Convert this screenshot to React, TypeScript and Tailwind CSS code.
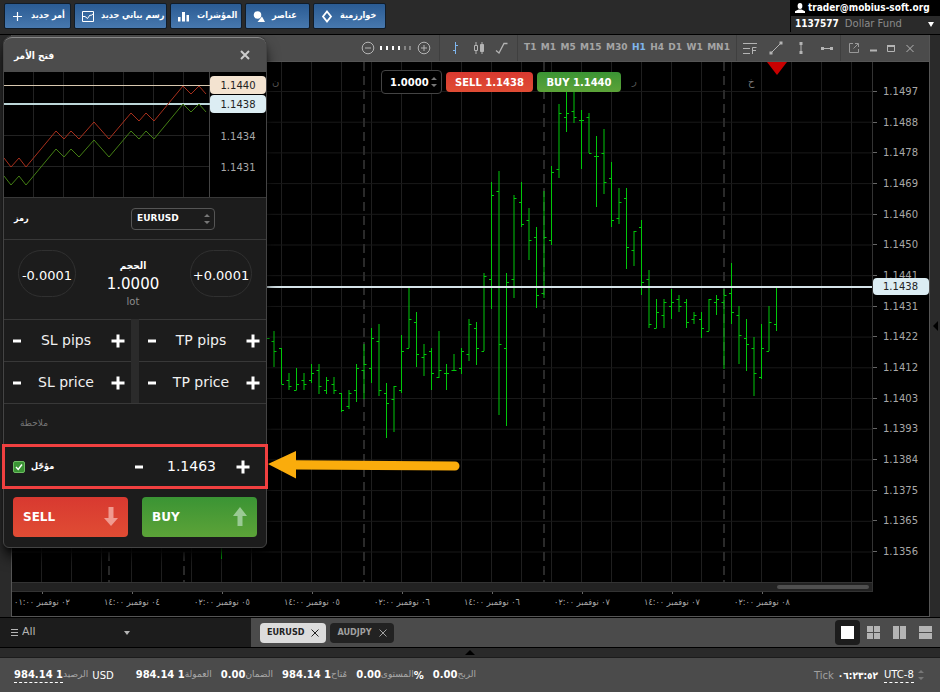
import React, {ReactNode, useState} from 'react';
import clsx from 'clsx';

type Bar = [high: number, low: number, open: number, close: number];

const CONDENSED = "font-['DejaVu_Sans_Condensed','DejaVu_Sans',sans-serif]";

const TIMEFRAMES = ['T1', 'M1', 'M5', 'M15', 'M30', 'H1', 'H4', 'D1', 'W1', 'MN1'];

const PRICES = [
    '1.1497', '1.1488', '1.1478', '1.1469', '1.1460', '1.1450', '1.1441', '1.1431',
    '1.1422', '1.1412', '1.1403', '1.1393', '1.1384', '1.1375', '1.1365', '1.1356'
];

const TIMES = [
    '٠٢ نوفمبر ٠١:٠٠',
    '٠٤ نوفمبر ١٤:٠٠',
    '٠٥ نوفمبر ٠٢:٠٠',
    '٠٥ نوفمبر ١٤:٠٠',
    '٠٦ نوفمبر ٠٢:٠٠',
    '٠٦ نوفمبر ١٤:٠٠',
    '٠٧ نوفمبر ٠٢:٠٠',
    '٠٧ نوفمبر ١٤:٠٠',
    '٠٨ نوفمبر ٠٢:٠٠'
];

const FIRST_BAR_X = 274;
const BAR_STEP = 7.5;

const BARS: Bar[] = [
    [331, 367, 341, 351], [348, 384, 348, 384], [373, 390, 380, 386], [368, 390, 390, 384],
    [373, 390, 380, 384], [364, 383, 380, 373], [364, 394, 370, 386], [377, 394, 390, 380],
    [377, 394, 384, 390], [393, 412, 393, 410], [390, 409, 406, 393], [364, 402, 390, 368],
    [344, 399, 370, 364], [328, 383, 368, 338], [324, 396, 341, 390], [383, 438, 393, 403],
    [386, 432, 399, 386], [335, 393, 390, 351], [288, 348, 348, 319], [312, 367, 322, 354],
    [344, 376, 357, 354], [348, 390, 351, 373], [331, 378, 377, 370], [364, 390, 373, 373],
    [354, 371, 370, 370], [348, 374, 368, 351], [319, 361, 354, 324], [322, 365, 328, 348],
    [273, 351, 351, 276], [182, 309, 279, 195], [171, 415, 191, 344], [273, 426, 348, 282],
    [195, 298, 279, 198], [182, 227, 202, 224], [208, 260, 220, 240], [227, 308, 237, 295],
    [191, 298, 293, 237], [166, 245, 240, 172], [104, 178, 169, 113], [92, 132, 117, 113],
    [92, 123, 111, 117], [110, 169, 120, 120], [113, 153, 117, 153], [136, 207, 156, 156],
    [129, 194, 153, 182], [162, 227, 178, 220], [188, 224, 218, 202], [188, 269, 198, 247],
    [231, 266, 250, 231], [220, 295, 227, 282], [270, 328, 279, 324], [299, 328, 328, 312],
    [299, 328, 315, 302], [289, 319, 306, 302], [295, 312, 299, 306], [299, 328, 302, 322],
    [312, 324, 319, 315], [312, 338, 319, 328], [299, 331, 331, 299], [295, 315, 302, 299],
    [289, 369, 302, 295], [263, 324, 293, 312], [306, 364, 315, 335], [319, 371, 338, 344],
    [337, 396, 348, 373], [324, 379, 377, 348], [306, 351, 351, 322], [287, 331, 324, 287]
];

const barPath = ([high, low, open, close]: Bar, i: number) => {
    const x = FIRST_BAR_X + i * BAR_STEP;
    return `M${x} ${high}V${low}M${x - 2.5} ${open + 0.5}H${x}M${x} ${close + 0.5}H${x + 2.5}`;
};

const PriceChart = () => (
    <svg
        viewBox="12 62 860 520"
        preserveAspectRatio="none"
        className="absolute inset-0 h-full w-full"
        fill="none"
        aria-hidden="true">
        {Array.from({length: 28}, (_, i) => (
            <path key={i} d={`M${41.5 + i * 30} 62V582`} stroke="#1f1f1f"/>
        ))}
        {PRICES.map((p, i) => (
            <path key={p} d={`M12 ${91.5 + i * 30.7}H872`} stroke="#191919"/>
        ))}
        {[109, 184, 364, 544, 724].map((x) => (
            <path key={x} d={`M${x} 62V582`} stroke="#2a2a2a" strokeWidth="2" strokeDasharray="9 5"/>
        ))}
        <path d={BARS.map(barPath).join('')} stroke="#00c80a"/>
        <path d="M221.5 300V559M267 338.5H269.5" stroke="#00c80a"/>
        <path d="M12 287H872" stroke="#d5e3e8" strokeWidth="2"/>
        <path d="M767 62H787L777 75Z" fill="#c80000"/>
    </svg>
);

const RED = '4,157 11,166 19,157 26,166 56,130 64,138 71,130 79,138 94,121 109,138 131,112 139,120 146,112 154,120 183,85 191,93 199,85 206,93';
const GREEN = '4,175 11,184 19,175 26,184 56,148 64,156 71,148 79,156 94,139 109,156 131,130 139,138 146,130 154,138 183,103 191,111 199,103 206,111';

const TickChart = () => (
    <svg
        viewBox="4 71 206 125"
        preserveAspectRatio="none"
        className="h-full min-w-0 flex-1"
        fill="none"
        aria-hidden="true">
        <path
            d="M33.5 71V196M63.5 71V196M93.5 71V196M123.5 71V196M153.5 71V196M183.5 71V196M4 134.5H210M4 165.5H210"
            stroke="#222"/>
        <path d="M209.5 71V196" stroke="#444"/>
        <path d="M4 84.5H210" stroke="#d8c8b0"/>
        <path d="M4 103H210" stroke="#bcd6d8" strokeWidth="2"/>
        <polyline points={RED} stroke="#a8301c"/>
        <polyline points={GREEN} stroke="#447f14"/>
    </svg>
);

const Spinner = ({className}: {className?: string}) => (
    <svg viewBox="0 0 6 12" className={clsx('pointer-events-none h-3 w-1.5', className)} fill="#777" aria-hidden="true">
        <path d="M0 4 3 1 6 4ZM0 8 3 11 6 8Z"/>
    </svg>
);

interface TopButtonProps {
    label: string;
    className: string;
    children: ReactNode;
}

const TopButton = ({label, className, children}: TopButtonProps) => (
    <button
        type="button"
        className={clsx(
            'flex h-[26px] items-center gap-1.5 rounded-xs border border-[#111c28] bg-linear-to-b from-[#2a5b93] to-[#4778ae] pl-1.5 text-[9px] font-bold whitespace-nowrap text-white',
            CONDENSED,
            className
        )}>
        <svg viewBox="0 0 14 14" className="h-3.5 w-3.5 shrink-0" fill="none" stroke="#fff" aria-hidden="true">
            {children}
        </svg>
        <span>{label}</span>
    </button>
);

const TopBar = () => (
    <header className="flex justify-between border-b border-black bg-[#2a2a2a]">
        <div className="flex gap-[3px] pt-[3px] pb-[5px] pl-1">
            <TopButton label="أمر جديد" className="w-[67px]">
                <path d="M6.5 3V12M2 7.5H11" strokeWidth="1.2"/>
            </TopButton>
            <TopButton label="رسم بياني جديد" className="w-[93px]">
                <path d="M1.5 2.5H12.5V12.5H1.5ZM2 7.5H4L6.5 9.5L9 6L10 6.5L12 5"/>
            </TopButton>
            <TopButton label="المؤشرات" className="w-[72px]">
                <path d="M1 8H3.5V12.5H1ZM5 3H8V12.5H5ZM9.5 6H12V12.5H9.5Z" fill="#fff" stroke="none"/>
            </TopButton>
            <TopButton label="عناصر" className="w-[65px]">
                <circle cx="5.5" cy="6" r="3.8" fill="#fff" stroke="none"/>
                <path d="M10 7.5 13 13H5.5Z" fill="#fff" stroke="none"/>
            </TopButton>
            <TopButton label="خوارزمية" className="w-[73px]">
                <path d="M7 2.5 11 7.5 7 12.5 3 7.5Z" strokeWidth="1.8"/>
            </TopButton>
        </div>
        <div className="mb-0.5 flex w-[150px] flex-col border-l border-black text-[10px] leading-4">
            <div className={clsx('flex items-center gap-[3px] bg-black pl-1 font-bold whitespace-nowrap text-white', CONDENSED)}>
                <svg viewBox="0 0 10 10" className="h-2.5 w-2.5 shrink-0" fill="#fff" aria-hidden="true">
                    <ellipse cx="5" cy="3" rx="2.4" ry="2.9"/>
                    <path d="M0 10V8.2L3.5 6.5H6.5L10 8.2V10Z"/>
                </svg>
                trader@mobius-soft.org
            </div>
            <button type="button" className="flex flex-1 items-center gap-1.5 pl-1 text-[#8a8a8a]">
                <span className={clsx('font-bold text-white', CONDENSED)}>1137577</span>
                Dollar Fund
                <svg viewBox="0 0 6 5" className="mr-[6px] ml-auto h-[5px] w-1.5" fill="#fff" aria-hidden="true">
                    <path d="M0 0H6L3 5Z"/>
                </svg>
            </button>
        </div>
    </header>
);

interface ToolProps {
    label: string;
    className?: string;
    children: ReactNode;
}

const Tool = ({label, className, children}: ToolProps) => (
    <button type="button" aria-label={label} className="shrink-0">
        <svg
            viewBox="0 0 14 14"
            className={clsx('h-3.5 w-3.5', className ?? 'text-[#b4b4b4]')}
            fill="none"
            stroke="currentColor"
            aria-hidden="true">
            {children}
        </svg>
    </button>
);

const ChartToolbar = () => {
    const [frame, setFrame] = useState('H1');

    return (
        <div className="flex h-[27px] items-stretch justify-end border-b border-[#555] bg-[#4b4b4b]">
            <div className="flex w-[78px] items-center gap-[5px]">
                <Tool label="Zoom out">
                    <circle cx="7" cy="7" r="5.8"/>
                    <path d="M4 7H10"/>
                </Tool>
                <svg viewBox="0 0 32 6" className="h-1.5 w-8" aria-hidden="true">
                    {[0, 6, 12, 18, 24, 29].map((x, i) => (
                        <rect key={x} x={x} y="1" width="2" height="4" fill={i < 4 ? '#fff' : '#858585'}/>
                    ))}
                </svg>
                <Tool label="Zoom in">
                    <circle cx="7" cy="7" r="5.8"/>
                    <path d="M4 7H10M7 4V10"/>
                </Tool>
            </div>
            <div className="flex w-[79px] items-center justify-around border-x border-[#3f3f3f] px-1">
                <Tool label="Bars" className="text-[#7fb6ee]">
                    <path d="M6.5 1V13M4 9.5H6.5M6.5 4.5H9"/>
                </Tool>
                <Tool label="Candles">
                    <path d="M4 1V4M4 10V13M2.5 4.5H5.5V9.5H2.5Z"/>
                    <path d="M10 1V13"/>
                    <path d="M8.5 3.5H11.5V10.5H8.5Z" fill="currentColor"/>
                </Tool>
                <Tool label="Line">
                    <path d="M1 9.5 4 12 9 2.5H12.5" strokeWidth="1.3"/>
                </Tool>
            </div>
            <div className="flex w-[218px] items-center justify-between px-1.5 text-[9px] font-bold text-[#a5a5a5]">
                {TIMEFRAMES.map((t) => (
                    <button
                        key={t}
                        type="button"
                        onClick={() => setFrame(t)}
                        className={clsx(t === frame && 'text-[#7fb6ee]')}>
                        {t}
                    </button>
                ))}
            </div>
            <div className="flex w-[105px] items-center justify-around border-x border-[#3f3f3f]">
                <Tool label="Fibonacci">
                    <path d="M0 2.5H14M0 7.5H7M0 12.5H7M9.5 13V6.5H13.5M9.5 9.5H13"/>
                </Tool>
                <Tool label="Trend line">
                    <path d="M2 12 12 2"/>
                    <path d="M.5 10.5H3.5V13.5H.5ZM10.5.5H13.5V3.5H10.5Z" fill="currentColor" stroke="none"/>
                </Tool>
                <Tool label="Vertical line">
                    <path d="M7 2V12"/>
                    <path d="M5.5 1H8.5V4H5.5ZM5.5 10H8.5V13H5.5Z" fill="currentColor" stroke="none"/>
                </Tool>
                <Tool label="Horizontal line">
                    <path d="M2 7.5H12"/>
                    <path d="M1 6H4V9H1ZM10 6H13V9H10Z" fill="currentColor" stroke="none"/>
                </Tool>
            </div>
            <div className="flex w-[88px] items-center justify-between pr-3 pl-1.5">
                <Tool label="Detach">
                    <path d="M6 2.5H2.5V11.5H11.5V8M8 2.5H11.5V6M11 3 6.5 7.5" stroke="#999"/>
                </Tool>
                <Tool label="Minimize">
                    <path d="M4 9.5H11" strokeWidth="2"/>
                </Tool>
                <Tool label="Maximize">
                    <path d="M3.5 5V10.5H10.5V5"/>
                    <path d="M3 5H11" strokeWidth="2"/>
                </Tool>
                <Tool label="Close chart">
                    <path d="M3.5 4 10.5 11M10.5 4 3.5 11"/>
                </Tool>
            </div>
        </div>
    );
};

const QuickTrade = () => (
    <div className="absolute top-2 left-1/2 flex -translate-x-[61px] items-center gap-1 text-[10px] font-bold text-white">
        <label className="relative flex h-6 w-[61px] items-center rounded-sm border border-[#444] bg-black">
            <input
                aria-label="Volume"
                defaultValue="1.0000"
                className="w-full bg-transparent pl-2 outline-none"/>
            <Spinner className="absolute right-1"/>
        </label>
        <button type="button" className="h-5 w-[87px] rounded-sm bg-linear-to-b from-[#d83930] to-[#e04c34]">
            SELL 1.1438
        </button>
        <button type="button" className="h-5 w-[84px] rounded-sm bg-linear-to-b from-[#3a9434] to-[#5ca338]">
            BUY 1.1440
        </button>
    </div>
);

const ChartWindow = () => (
    <section className="flex min-w-0 flex-1 flex-col border-x border-b border-[#555] bg-black">
        <ChartToolbar/>
        <div className="flex flex-1">
            <div className="flex min-w-0 flex-1 flex-col">
                <div className="relative min-h-[520px] flex-1">
                    <PriceChart/>
                    <div className="absolute top-3 left-[260px] text-[10px] text-[#555]">ن</div>
                    <div className="absolute top-3 left-[620px] text-[10px] text-[#555]">ر</div>
                    <div className="absolute top-3 left-[736px] text-[10px] text-[#777]">خ</div>
                    <QuickTrade/>
                </div>
                <div className="flex h-2.5 items-center justify-end border-y border-[#333] bg-[#222] pr-[3px]">
                    <div className="h-1 w-[92px] rounded-full bg-[#4f4f4f]"></div>
                </div>
            </div>
            <div className="relative flex w-[57px] flex-col border-l border-[#333] pt-3.5 pb-[25px] text-[10px] text-[#a8a8a8]">
                {PRICES.map((p) => (
                    <div key={p} className="flex flex-1 items-center gap-1.5">
                        <span className="h-px w-1 bg-[#666]"></span>
                        {p}
                    </div>
                ))}
                <div className="absolute inset-x-0 top-[216px] flex h-[17px] items-center rounded-sm bg-[#dcedf3] pl-2.5 text-[#222]">
                    1.1438
                </div>
            </div>
        </div>
        <div className="flex h-6 overflow-hidden text-[9px] text-[#a8a8a8]">
            {TIMES.map((t) => (
                <div
                    key={t}
                    className={clsx(
                        'flex w-[90px] shrink-0 flex-col items-center gap-0.5 whitespace-nowrap first:w-[75px] first:pr-[15px]',
                        CONDENSED
                    )}>
                    <span className="h-0.5 w-px bg-[#666]"></span>
                    <span dir="rtl">{t}</span>
                </div>
            ))}
        </div>
    </section>
);

const SignButton = ({plus}: {plus?: boolean}) => (
    <button type="button" aria-label={plus ? 'Increase' : 'Decrease'} className="shrink-0">
        <svg
            viewBox={plus ? '0 0 14 14' : '0 0 8 14'}
            className={clsx('h-3.5', plus ? 'w-3.5' : 'w-2')}
            fill="none"
            stroke="#fff"
            strokeWidth="3"
            aria-hidden="true">
            <path d={plus ? 'M.5 7H13.5M7 .5V13.5' : 'M0 7H8'}/>
        </svg>
    </button>
);

const Stepper = ({label}: {label: string}) => (
    <div className="flex h-[42px] min-w-0 items-center border-t border-[#383838] bg-[#1c1c1c] pr-1.5 pl-[9px]">
        <SignButton/>
        <input
            aria-label={label}
            placeholder={label}
            className="w-full min-w-0 flex-1 bg-transparent text-center text-[14px] text-white outline-none placeholder:text-[#f0f0f0]"/>
        <SignButton plus/>
    </div>
);

const OrderPanel = () => {
    const [pending, setPending] = useState(true);

    return (
        <aside className="absolute top-px left-[3px] w-[264px] rounded-t-lg rounded-b-md border border-[#444] bg-[#1c1c1c] text-white shadow-lg shadow-black">
            <div className="flex h-[35px] items-center justify-between rounded-t-lg border-t border-[#888] bg-[#4c4c4c] pr-4 pl-2.5">
                <h2 className={clsx('text-[10px] font-bold', CONDENSED)}>فتح الأمر</h2>
                <button type="button" aria-label="Close">
                    <svg viewBox="0 0 10 10" className="h-2.5 w-2.5" stroke="#ccc" strokeWidth="2" aria-hidden="true">
                        <path d="M1 1 9 9M9 1 1 9"/>
                    </svg>
                </button>
            </div>
            <div className="flex h-[125px] bg-black text-[10px]">
                <TickChart/>
                <div className="flex w-14 flex-col pt-1">
                    <div className="mb-px flex h-[18px] items-center justify-center rounded-sm bg-[#f3e3d0] text-[#222]">1.1440</div>
                    <div className="flex h-[18px] items-center justify-center rounded-sm bg-[#dcedf3] text-[#222]">1.1438</div>
                    <div className="mt-2 flex h-[31px] items-center justify-center text-[#a8a8a8]">1.1434</div>
                    <div className="flex h-[31px] items-center justify-center text-[#a8a8a8]">1.1431</div>
                </div>
            </div>
            <div className="flex h-[42px] items-center border-t border-[#383838] px-2.5">
                <label htmlFor="symbol" className={clsx('w-[117px] text-[9px] font-bold', CONDENSED)}>رمز</label>
                <div className="relative flex h-[22px] w-[84px] items-center rounded border border-[#555]">
                    <select id="symbol" className="h-full w-full appearance-none bg-transparent pl-[5px] text-[9px] font-bold outline-none">
                        <option>EURUSD</option>
                        <option>AUDJPY</option>
                    </select>
                    <Spinner className="absolute right-1"/>
                </div>
            </div>
            <div className="flex h-20 items-start justify-between border-t border-[#383838] px-3.5 pt-2.5">
                <button type="button" className="flex h-[47px] w-[58px] items-center justify-center rounded-3xl border border-[#303030] pt-1 text-[13px] whitespace-nowrap">
                    -0.0001
                </button>
                <div className="pt-2 text-center">
                    <div className={clsx('text-[10px] leading-4 font-bold', CONDENSED)}>الحجم</div>
                    <div className="text-[15px] leading-5">1.0000</div>
                    <div className="text-[10px] leading-4 text-[#8c8c8c]">lot</div>
                </div>
                <button type="button" className="flex h-[47px] w-[62px] items-center justify-center rounded-3xl border border-[#303030] pt-1 text-[13px] whitespace-nowrap">
                    +0.0001
                </button>
            </div>
            <div className="grid grid-cols-2 gap-x-2 border-b border-[#383838] bg-[#2b2b2b]">
                <Stepper label="SL pips"/>
                <Stepper label="TP pips"/>
                <Stepper label="SL price"/>
                <Stepper label="TP price"/>
            </div>
            <div className="flex h-10 items-center px-4">
                <input
                    aria-label="ملاحظة"
                    placeholder="ملاحظة"
                    className="w-full bg-transparent text-[9px] outline-none placeholder:text-[#777]"/>
            </div>
            <div className="relative flex h-[45px] items-center pr-4 pl-[9px]">
                <label className={clsx('flex flex-1 items-center gap-1.5 text-[9px] font-bold', CONDENSED)}>
                    <span className="relative flex h-3 w-3">
                        <input
                            type="checkbox"
                            checked={pending}
                            onChange={() => setPending(!pending)}
                            className="h-3 w-3 appearance-none rounded-xs border border-[#6dbb62] bg-[#3a9434]"/>
                        {pending && (
                            <svg viewBox="0 0 12 12" className="pointer-events-none absolute inset-0" fill="none" stroke="#fff" strokeWidth="1.4" aria-hidden="true">
                                <path d="M3 6 5.2 8.5 9 3.5"/>
                            </svg>
                        )}
                    </span>
                    مؤجّل
                </label>
                <SignButton/>
                <input
                    aria-label="Price"
                    defaultValue="1.1463"
                    className="w-[93px] bg-transparent pl-1 text-center text-[14px] outline-none"/>
                <SignButton plus/>
                <div className="pointer-events-none absolute -inset-x-[2px] inset-y-0 border-3 border-[#f04040]"></div>
                <svg viewBox="0 0 194 28" className="pointer-events-none absolute top-[7px] left-full h-7 w-[194px] translate-x-0.5" aria-hidden="true">
                    <path d="M0 13 28 0V9.3L187 10.5A4.5 4.5 0 0 1 187 19.5L28 18.5V27.5Z" fill="#faac0c"/>
                </svg>
            </div>
            <div className="grid grid-cols-2 gap-3.5 px-[9px] pt-2 pb-2.5 text-[12px] font-bold">
                <button type="button" className="flex h-10 items-center justify-between rounded-sm bg-linear-to-b from-[#d83930] to-[#e04c34] px-2.5">
                    SELL
                    <svg viewBox="0 0 14 20" className="h-5 w-3.5" fill="#f09a90" aria-hidden="true">
                        <path d="M4.5 0H9.5V11H14L7 19 0 11H4.5Z"/>
                    </svg>
                </button>
                <button type="button" className="flex h-10 items-center justify-between rounded-sm bg-linear-to-b from-[#3a9434] to-[#5ca338] px-2.5">
                    BUY
                    <svg viewBox="0 0 14 20" className="h-5 w-3.5" fill="#9aca94" aria-hidden="true">
                        <path d="M4.5 19H9.5V9H14L7 0 0 9H4.5Z"/>
                    </svg>
                </button>
            </div>
        </aside>
    );
};

const LAYOUTS = [
    {label: 'Single', d: 'M0 0H13V13H0Z'},
    {label: 'Grid', d: 'M0 0H6V6H0ZM7 0H13V6H7ZM0 7H6V13H0ZM7 7H13V13H7Z'},
    {label: 'Columns', d: 'M0 0H6V13H0ZM7 0H13V13H7Z'},
    {label: 'Rows', d: 'M0 0H13V6H0ZM0 7H13V13H0Z'}
];

const SymbolTab = ({name, active}: {name: string; active?: boolean}) => (
    <button
        type="button"
        className={clsx(
            'flex h-5 items-center gap-[7px] rounded-sm px-[7px] text-[9px] font-bold',
            CONDENSED,
            active ? 'bg-[#dcdcdc] text-[#222]' : 'bg-[#222] text-[#a0a0a0]'
        )}>
        {name}
        <svg viewBox="0 0 8 8" className="h-2 w-2" stroke="currentColor" aria-hidden="true">
            <path d="M.5.5 7.5 7.5M7.5.5.5 7.5"/>
        </svg>
    </button>
);

const TabBar = () => (
    <div className="flex h-[31px] border-y border-black bg-[#4b4b4b]">
        <div className="relative flex w-[251px] items-center gap-1 bg-[#1c1c1c] pl-[11px] text-[#b4b4b4]">
            <svg viewBox="0 0 7 8" className="h-2 w-[7px]" stroke="currentColor" aria-hidden="true">
                <path d="M0 .5H7M0 3.5H7M0 6.5H7"/>
            </svg>
            <select aria-label="Filter" className="w-[108px] appearance-none bg-transparent text-[11px] outline-none">
                <option>All</option>
            </select>
            <svg viewBox="0 0 6 4" className="pointer-events-none absolute left-[124px] h-1 w-1.5" fill="currentColor" aria-hidden="true">
                <path d="M0 0H6L3 4Z"/>
            </svg>
        </div>
        <div className="flex flex-1 items-center gap-1 pl-[9px]">
            <SymbolTab name="EURUSD" active/>
            <SymbolTab name="AUDJPY"/>
        </div>
        <div className="flex items-center gap-px pr-0.5">
            {LAYOUTS.map(({label, d}, i) => (
                <button
                    key={label}
                    type="button"
                    aria-label={label}
                    className={clsx('flex h-[25px] w-[25px] items-center justify-center rounded-sm', i === 0 && 'bg-[#1c1c1c]')}>
                    <svg viewBox="0 0 13 13" className="h-[13px] w-[13px]" fill={i === 0 ? '#fff' : '#b4b4b4'} aria-hidden="true">
                        <path d={d}/>
                    </svg>
                </button>
            ))}
        </div>
    </div>
);

interface StatProps {
    value: string;
    label: string;
    unit?: string;
    underline?: boolean;
}

const Stat = ({value, label, unit, underline}: StatProps) => (
    <div className="flex items-center whitespace-nowrap">
        <span className={clsx('border-b border-dashed text-[10px] leading-[14px] font-bold', underline ? 'border-white' : 'border-transparent')}>
            {value}
        </span>
        <span className="text-[9px] text-[#a8a8a8]">{label}</span>
        {unit && <span className="text-[10px] font-bold">{unit}</span>}
    </div>
);

const StatusBar = () => (
    <footer className="flex h-[34px] items-center justify-between bg-[#4b4b4b] pr-4 pl-3.5 text-white">
        <div className="flex items-center">
            <Stat value="984.14 1" label="الرصيد" underline/>
            <span className="pr-[22px] pl-1 text-[10px]">USD</span>
            <div className="flex gap-[9px]">
                <Stat value="984.14 1" label="العمولة"/>
                <Stat value="0.00" label="الضمان"/>
                <Stat value="984.14 1" label="مُتاح"/>
                <Stat value="0.00" label="المستوى" unit="%"/>
                <Stat value="0.00" label="الربح"/>
            </div>
        </div>
        <div className="flex items-center gap-1 text-[10px]">
            <span className="text-[#a0a0a0]">Tick</span>
            <span className={clsx('pr-0.5 font-bold', CONDENSED)}>٠٦:٢٣:٥٢</span>
            <select aria-label="Time zone" className="h-4 appearance-none border-b border-dashed border-white bg-transparent outline-none">
                <option>UTC-8</option>
            </select>
            <Spinner/>
        </div>
    </footer>
);

const App = () => (
    <div className="flex min-h-screen flex-col bg-[#2a2a2a] font-['DejaVu_Sans',sans-serif]">
        <TopBar/>
        <main className="relative flex flex-1 pl-[11px]">
            <ChartWindow/>
            <button type="button" aria-label="Show side panel" className="flex w-2.5 items-center justify-center">
                <svg viewBox="0 0 5 10" className="h-2.5 w-[5px]" fill="#000" aria-hidden="true">
                    <path d="M5 0V10L0 5Z"/>
                </svg>
            </button>
            <OrderPanel/>
        </main>
        <TabBar/>
        <button type="button" aria-label="Show orders" className="flex h-2.5 items-center justify-center border-b border-[#1c1c1c]">
            <svg viewBox="0 0 10 5" className="h-[5px] w-2.5" fill="#000" aria-hidden="true">
                <path d="M0 5H10L5 0Z"/>
            </svg>
        </button>
        <StatusBar/>
    </div>
);

export default App;
